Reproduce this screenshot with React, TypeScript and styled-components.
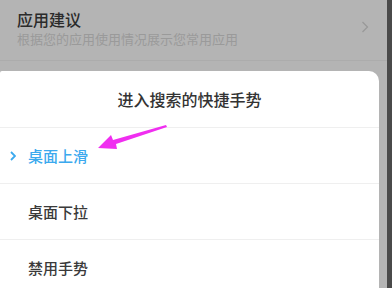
import React from 'react';
import styled, { createGlobalStyle } from 'styled-components';

const GlobalStyle = createGlobalStyle`
  html, body {
    margin: 0;
    padding: 0;
    width: 392px;
    height: 288px;
    overflow: hidden;
    font-family: "Noto Sans CJK SC", "Noto Sans", sans-serif;
  }
`;

const Page = styled.div`
  display: flex;
  width: 392px;
  height: 288px;
  position: relative;
`;

const Screen = styled.div`
  flex: 1;
  display: flex;
  flex-direction: column;
  background: #b4b4b4;
  overflow: hidden;
`;

const EdgeStrip = styled.div`
  width: 5px;
  background: #4a4a4a;
`;

const SettingItem = styled.div`
  flex-shrink: 0;
  display: flex;
  align-items: center;
  box-sizing: border-box;
  padding: 0 18px 6px 17px;
  height: 61px;
  border-bottom: 1px solid #acacac;
`;

const ItemText = styled.div`
  flex: 1;
  align-self: flex-start;
  margin-top: 8px;
  display: flex;
  flex-direction: column;
`;

const ItemTitle = styled.div`
  font-size: 16px;
  line-height: 22px;
  color: #2b2b2b;
  font-weight: 500;
`;

const ItemSub = styled.div`
  font-size: 13px;
  line-height: 18px;
  color: #9a9a9a;
`;

const Sheet = styled.div`
  flex-shrink: 0;
  margin-top: 10px;
  margin-right: 8px;
  background: #fff;
  border-radius: 2px 10px 0 0;
  display: flex;
  flex-direction: column;
`;

const SheetTitle = styled.div`
  height: 56px;
  display: flex;
  align-items: center;
  justify-content: center;
  font-size: 16px;
  color: #333;
  font-weight: 500;
  border-bottom: 1px solid #efefef;
`;

const Option = styled.div<{ $active?: boolean }>`
  height: 55px;
  display: flex;
  align-items: center;
  padding-left: 28px;
  position: relative;
  font-size: 15px;
  font-weight: 500;
  color: ${(p) => (p.$active ? '#3ba9ee' : '#3a3a3a')};
  border-bottom: 1px solid #efefef;
`;

const Check = styled.span`
  position: absolute;
  left: 10px;
  top: 50%;
  transform: translateY(-50%);
  display: flex;
`;

const Pointer = styled.svg`
  position: absolute;
  left: 90px;
  top: 118px;
`;

export default function App() {
  return (
    <>
      <GlobalStyle />
      <Page>
        <Screen>
          <SettingItem>
            <ItemText>
              <ItemTitle>应用建议</ItemTitle>
              <ItemSub>根据您的应用使用情况展示您常用应用</ItemSub>
            </ItemText>
            <svg width="8" height="12" viewBox="0 0 8 12">
              <path d="M1.5 1 L6.5 6 L1.5 11" fill="none" stroke="#999" strokeWidth="1.3" />
            </svg>
          </SettingItem>
          <Sheet>
            <SheetTitle>进入搜索的快捷手势</SheetTitle>
            <Option $active>
              <Check>
                <svg width="6" height="10" viewBox="0 0 6 10">
                  <path d="M1 1 L5 5 L1 9" fill="none" stroke="#3ba9ee" strokeWidth="1.8" />
                </svg>
              </Check>
              桌面上滑
            </Option>
            <Option>桌面下拉</Option>
            <Option>禁用手势</Option>
          </Sheet>
        </Screen>
        <EdgeStrip />
        <Pointer width="90" height="40" viewBox="0 0 90 40">
          <path d="M76 7 L77 9 L26 26 L27 31 L8 30 L21 17 L23 22 Z" fill="#f02ef0" />
        </Pointer>
      </Page>
    </>
  );
}
